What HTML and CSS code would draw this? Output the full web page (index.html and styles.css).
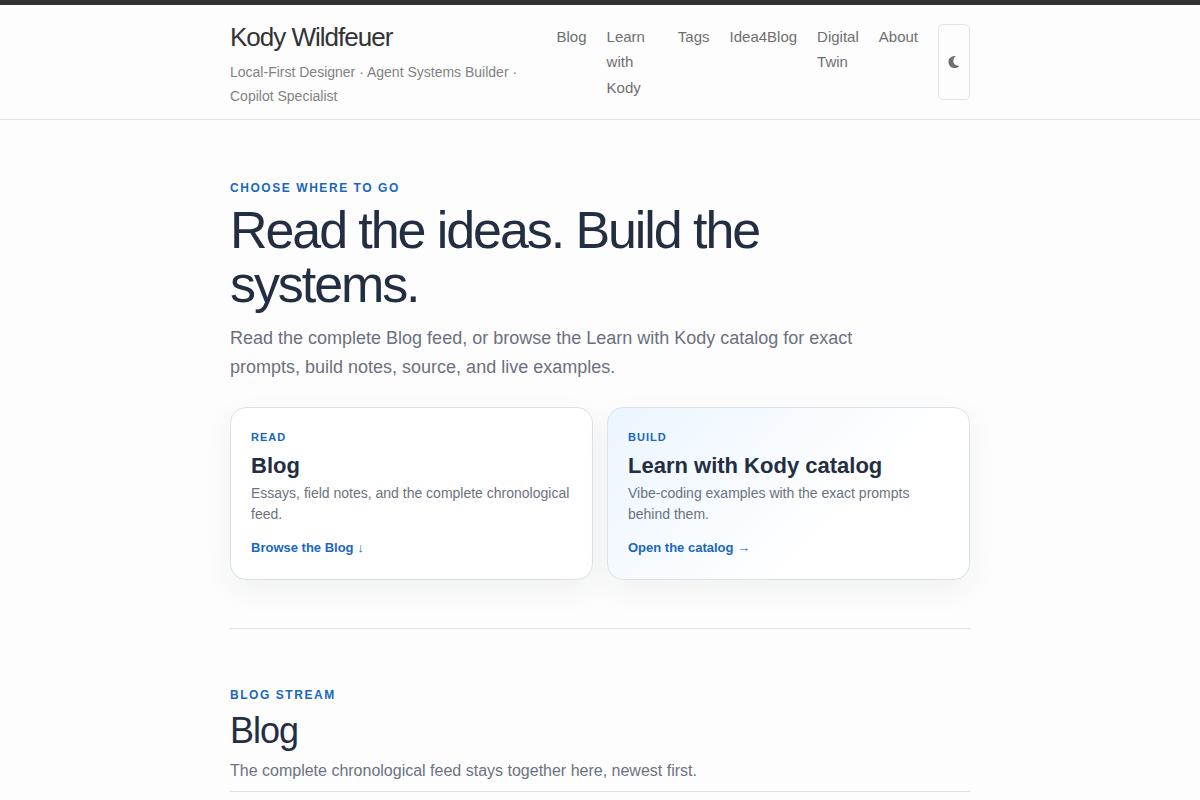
FILE: index.html
```html
<!DOCTYPE html>
<html lang="en">
<head>
  <meta charset="utf-8">
  <meta name="viewport" content="width=device-width, initial-scale=1">
  <title>Kody Wildfeuer</title>
  <link rel="stylesheet" href="styles.css">
</head>
<body>
  <header class="site-header">
    <div class="wrapper site-header-inner">
      <div class="brand">
        <a class="site-title" href="#">Kody Wildfeuer</a>
        <p class="tagline">Local-First Designer · Agent Systems Builder · Copilot Specialist</p>
      </div>
      <nav class="site-nav" aria-label="Main">
        <a href="#blog">Blog</a>
        <a href="#catalog">Learn with Kody</a>
        <a href="#tags">Tags</a>
        <a href="#ideas">Idea4Blog</a>
        <a href="#twin">Digital Twin</a>
        <a href="#about">About</a>
        <button class="theme-toggle" type="button" aria-label="Switch to dark theme">
          <svg width="12" height="14" viewBox="0 0 12 14" aria-hidden="true"><path d="M7.800 1C3.400.7.5 3.300.5 7c0 3.700 2.800 6.100 6.300 6.100 1.900 0 3.500-.7 4.500-2.100-.3-.2-.7-.3-1.100-.3-3-.1-4.900-1.900-4.900-4.600 0-2.200.8-3.900 2.500-5.100Z" fill="currentColor"/></svg>
        </button>
      </nav>
    </div>
  </header>
  <main class="wrapper">
    <section class="hero">
      <p class="eyebrow">CHOOSE WHERE TO GO</p>
      <h1 class="hero-title">Read the ideas. Build the systems.</h1>
      <p class="lead">Read the complete Blog feed, or browse the Learn with Kody catalog for exact prompts, build notes, source, and live examples.</p>
      <div class="cards">
        <a class="card" href="#blog">
          <span class="card-kicker">READ</span>
          <strong class="card-title">Blog</strong>
          <span class="card-text">Essays, field notes, and the complete chronological feed.</span>
          <span class="card-action">Browse the Blog ↓</span>
        </a>
        <a class="card card-tinted" href="#catalog">
          <span class="card-kicker">BUILD</span>
          <strong class="card-title">Learn with Kody catalog</strong>
          <span class="card-text">Vibe-coding examples with the exact prompts behind them.</span>
          <span class="card-action">Open the catalog →</span>
        </a>
      </div>
    </section>
    <section class="stream" id="blog">
      <p class="eyebrow">BLOG STREAM</p>
      <h2 class="stream-title">Blog</h2>
      <p class="stream-text">The complete chronological feed stays together here, newest first.</p>
    </section>
  </main>
</body>
</html>
```
FILE: styles.css
```css
* {
  box-sizing: border-box;
}

body {
  margin: 0;
  background: #fdfdfd;
  color: #333;
  font-family: "Liberation Sans", Arial, sans-serif;
}

p, h1, h2 {
  margin: 0;
  font-weight: 400;
}

a {
  color: inherit;
  text-decoration: none;
}

.wrapper {
  max-width: 800px;
  margin: 0 auto;
  padding: 0 30px;
}

.site-header {
  border-top: 5px solid #333;
  border-bottom: 1px solid #e4e4e4;
}

.site-header-inner {
  display: flex;
  align-items: center;
  padding-top: 11px;
  padding-bottom: 11px;
}

.site-title {
  display: block;
  font-size: 26px;
  line-height: 42px;
  letter-spacing: -1px;
}

.tagline {
  margin-top: 2px;
  color: #828282;
  font-size: 14px;
  line-height: 24px;
}

.site-nav {
  display: flex;
  gap: 20px;
  color: #6f6f6f;
  font-size: 15px;
  line-height: 1.7;
}

.theme-toggle {
  display: flex;
  flex: none;
  align-items: center;
  justify-content: center;
  width: 32px;
  padding: 0;
  border: 1px solid #e4e4e4;
  border-radius: 5px;
  background: transparent;
  color: #6f6f6f;
}

.hero {
  padding: 58px 0 48px;
  border-bottom: 1px solid #dfe2e5;
}

.eyebrow {
  color: #1967be;
  font-size: 12px;
  font-weight: 700;
  line-height: 20px;
  letter-spacing: 0.13em;
}

.hero-title {
  max-width: 680px;
  margin-top: 5px;
  color: #242e42;
  font-size: 52px;
  line-height: 54px;
  letter-spacing: -0.04em;
}

.lead {
  max-width: 680px;
  margin-top: 13px;
  color: #6b7080;
  font-size: 18px;
  line-height: 29px;
}

.cards {
  display: grid;
  grid-template-columns: repeat(auto-fit, minmax(260px, 1fr));
  gap: 14px;
  margin-top: 25px;
}

.card {
  display: flex;
  flex-direction: column;
  padding: 20px;
  border: 1px solid #dce1e6;
  border-radius: 16px;
  background: #fff;
  box-shadow: 0 10px 30px rgba(36, 46, 66, 0.06);
}

.card-tinted {
  background: linear-gradient(135deg, #ebf5ff 0%, #fff 65%);
}

.card-kicker {
  color: #1967be;
  font-size: 11px;
  font-weight: 700;
  line-height: 18px;
  letter-spacing: 1px;
}

.card-title {
  margin-top: 6px;
  color: #242e42;
  font-size: 22px;
  line-height: 28px;
}

.card-text {
  margin-top: 3px;
  color: #6b7280;
  font-size: 14px;
  line-height: 21px;
}

.card-action {
  margin-top: 12px;
  color: #1967be;
  font-size: 13px;
  font-weight: 700;
  line-height: 22px;
}

.stream {
  padding: 56px 0 7px;
  border-bottom: 1px solid #dfe2e5;
}

.stream-title {
  margin-top: 6px;
  color: #242e42;
  font-size: 36px;
  line-height: 40px;
  letter-spacing: -1px;
}

.stream-text {
  margin-top: 6px;
  color: #6b7280;
  font-size: 16px;
  line-height: 27px;
}
```
